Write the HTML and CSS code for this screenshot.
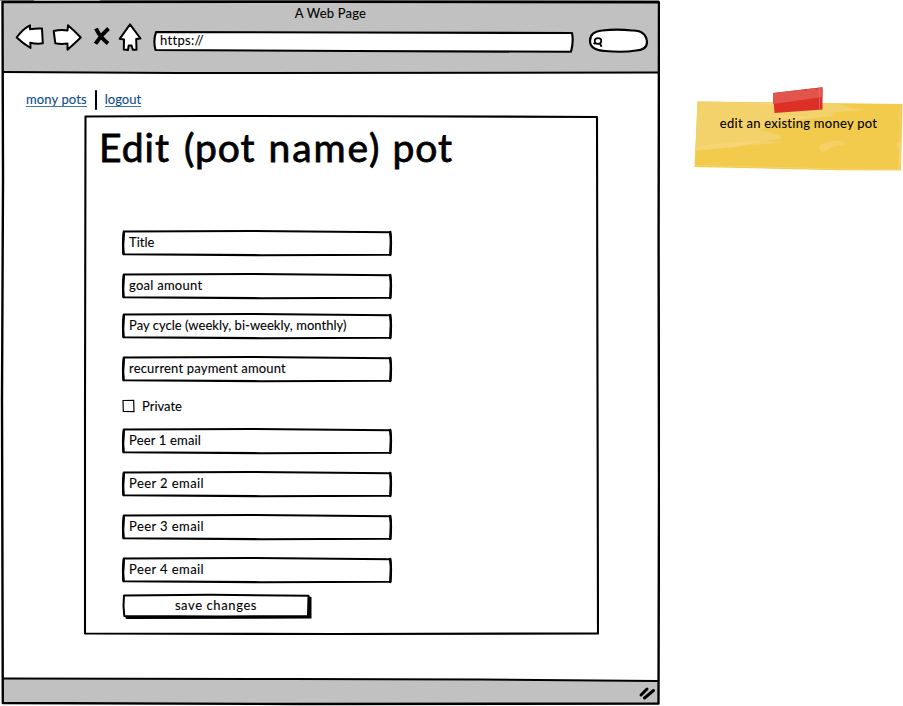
FILE: index.html
```html
<!DOCTYPE html>
<html lang="en">
<head>
<meta charset="utf-8">
<title>A Web Page</title>
<link rel="stylesheet" href="styles.css">
</head>
<body>
<svg class="defs" width="0" height="0" aria-hidden="true">
  <symbol id="field" viewBox="0 0 272 28">
    <path d="M3 2.5L130 2L269 3.2L270 10L269.4 25.7L140 26.2L2.5 25.2L2 17Z" fill="#fff" stroke="#000" stroke-width="2.1" stroke-linejoin="round"/>
    <path d="M2.8 3Q1.5 13 2.5 25M269.3 3Q270.6 13 269.3 26" fill="none" stroke="#000" stroke-width="2.3" stroke-linecap="round"/>
  </symbol>
</svg>
<main class="browser">
  <svg class="frame" viewBox="0 0 660 706" aria-hidden="true">
    <path d="M2 1.7L659 2.2V73H3Z" fill="#c1c1c1"/>
    <path d="M3 678.5L300 679L659 681V704L3 703Z" fill="#c1c1c1"/>
    <path d="M0 .5H34M100 .5H659" stroke="#8b908b"/>
    <path d="M2.5 2L330 1.7L659 2.2L658.6 240L659 480L658.5 703.5L300 704L2.8 703L2 400L3 180Z" fill="none" stroke="#000" stroke-width="2.4" stroke-linejoin="round"/>
    <path d="M3 72L180 73L659 72.5M3 678.5L290 679L480 679.5L658 681" fill="none" stroke="#000" stroke-width="2"/>
    <path d="M641 695L647 689M644.5 698L653.5 690.5" fill="none" stroke="#000" stroke-width="3" stroke-linecap="round"/>
  </svg>
  <header class="toolbar">
    <div class="page-title">A Web Page</div>
    <div class="controls">
      <svg class="tools" viewBox="0 0 130 32" aria-hidden="true">
        <g fill="#fff" stroke="#000" stroke-width="2" stroke-linejoin="round">
          <path d="M2.7 16.5Q8 8.5 16 4.3V8.2Q22 7.2 28 7.5L28.8 22.3Q23 23.3 16.3 21.7L16.5 27Q9 22.5 2.7 16.5Z"/>
          <path d="M39.7 10Q47 8.2 53.5 9.5L54 4.3Q60 9.5 66.8 16.5Q60 23 53.5 28.7L53.5 22.5Q47 23.5 41.3 22.3Z"/>
          <path d="M116 3.4L126.5 17.5L122.2 18L122.5 28.7H118.8L117.5 24.5H114.7L114 29L109.8 28.5L110 18.5L105.7 17.8Z"/>
        </g>
        <path d="M82 7.5Q86 16 94 22.5M94.5 7.5Q87 14 81.5 22.8" fill="none" stroke="#000" stroke-width="4"/>
      </svg>
      <div class="address">
        <svg class="sketch" viewBox="0 0 424 24" aria-hidden="true"><path d="M4 3L200 3.5L420 4Q421.8 12 419 22.8L200 22L3.5 21Q1 12 4 3Z" fill="#fff" stroke="#000" stroke-width="2.1" stroke-linejoin="round"/></svg>
        <span class="t url">https://</span>
      </div>
      <svg class="search" viewBox="0 0 62 28" aria-hidden="true">
        <path d="M3 14Q3 4.5 15 3.5Q30 1.8 45 3.5Q59 3 60 15Q60 23 49 23.5Q36 25.7 18 24Q3 23 3 14Z" fill="#fff" stroke="#000" stroke-width="2.2"/>
        <ellipse cx="11" cy="14" rx="3.3" ry="2.9" fill="none" stroke="#000" stroke-width="1.7"/>
        <path d="M6.5 16L8.5 17M12.5 16L14.7 19.8" stroke="#000" stroke-width="1.8" fill="none"/>
      </svg>
    </div>
  </header>
  <nav class="links">
    <a class="pots">mony pots</a><i class="divider"></i><a class="logout">logout</a>
  </nav>
  <section class="panel">
    <svg class="sketch" viewBox="0 0 516 521" aria-hidden="true"><path d="M2.5 2.5L120 2L300 2.2L514 3L514.5 270L515 519.5L250 520L2 519.5L2 300Z" fill="#fff" stroke="#000" stroke-width="2.1" stroke-linejoin="round"/></svg>
    <h1><span class="w1">Edit</span> <span class="w2">(pot</span> <span class="w3">name)</span> <span class="w4">pot</span></h1>
    <form class="form">
      <div class="field f1"><svg class="sketch"><use href="#field"/></svg><span class="t title">Title</span></div>
      <div class="field f2"><svg class="sketch"><use href="#field"/></svg><span class="t goal">goal amount</span></div>
      <div class="field f3"><svg class="sketch"><use href="#field"/></svg><span class="t cycle">Pay cycle (weekly, bi-weekly, monthly)</span></div>
      <div class="field f4"><svg class="sketch"><use href="#field"/></svg><span class="t recur">recurrent payment amount</span></div>
      <label class="check"><svg viewBox="0 0 14 14" width="14" height="14" aria-hidden="true"><path d="M1 1.5L11.7 1.3L12 12.7L1.3 12.4Z" fill="#fff" stroke="#000" stroke-width="1.2"/></svg><span class="t private">Private</span></label>
      <div class="field f5"><svg class="sketch"><use href="#field"/></svg><span class="t peer first">Peer 1 email</span></div>
      <div class="field f6"><svg class="sketch"><use href="#field"/></svg><span class="t peer">Peer 2 email</span></div>
      <div class="field f7"><svg class="sketch"><use href="#field"/></svg><span class="t peer">Peer 3 email</span></div>
      <div class="field f8"><svg class="sketch"><use href="#field"/></svg><span class="t peer">Peer 4 email</span></div>
      <div class="save">
        <svg class="sketch" viewBox="0 0 192 28" aria-hidden="true"><path d="M4 24L187 24V4L190.5 5V26.6L5 27Z"/><path d="M3 3.5L90 2.8L187.5 3.7L187 24L100 24.4L3.3 24L2.5 14Z" fill="#fff" stroke="#000" stroke-width="2" stroke-linejoin="round"/></svg>
        <span class="t savetext">save changes</span>
      </div>
    </form>
  </section>
</main>
<aside class="note">
  <svg class="sketch" viewBox="0 0 212 90" aria-hidden="true">
    <path d="M6.5 16.5L211.5 19L210 85.5L150 85.2L3.5 82Z" fill="#f2ca4c"/>
    <path d="M6.5 16.5L148 18.5Q155 23 177 25Q155 26 139 28Q150 32 130 32Q95 35 70 45Q98 52 88 54Q65 58 42 62Q20 64 4.5 65Z" fill="#f4d26b"/>
    <path d="M5 62Q45 54 99 57Q65 60 36 63L5 66ZM61 17L139 18Q115 25 83 30Q113 31 133 32Q105 37 76 31Q105 25 61 17ZM130 66Q124 60 136 57Q152 53 156 59Q140 61 133 67ZM203 60L210 56V82H208V63Z" fill="#f5d87e" opacity=".5"/>
    <path d="M4 80.5L150 84L209 84.5M209 22L208 84" fill="none" stroke="#f5d87e" opacity=".6"/>
    <path d="M82 8L131.5 2.2V24.5L83.5 28Z" fill="#dc3027"/>
    <path d="M82 8L131.5 2.2V12L82 19Z" fill="#e2554c"/>
    <path d="M113 5L117 4.5L115 6ZM124 3.5H127L126 5Z" fill="#dc3027"/>
    <path d="M128.5 3V24" stroke="#e77069" stroke-width=".7"/>
  </svg>
  <span class="t notetext">edit an existing money pot</span>
</aside>
</body>
</html>
```
FILE: styles.css
```css
* { box-sizing: border-box; }
body {
  margin: 0;
  width: 903px;
  height: 706px;
  overflow: hidden;
  display: flex;
  background: #fff;
  color: #000;
  font: 13px/16px Lato, "Open Sans", sans-serif;
  -webkit-text-stroke: .1px currentColor;
}
.defs { position: absolute; }
.browser {
  position: relative;
  width: 660px;
  height: 706px;
  flex: none;
}
.frame, .sketch {
  position: absolute;
  inset: 0;
  width: 100%;
  height: 100%;
}
.t { position: relative; white-space: nowrap; }
.toolbar { position: relative; height: 73px; padding-top: 5px; }
.page-title { padding-left: 1px; text-align: center; letter-spacing: .2px; }
.controls { display: flex; align-items: flex-start; }
.tools { width: 130px; height: 32px; margin-left: 14px; }
.address { position: relative; width: 424px; height: 24px; margin: 8px 0 0 8px; padding: 3px 8px; }
.address .t { display: block; }
.url { letter-spacing: .3px; }
.search { width: 62px; height: 28px; margin: 6px 0 0 11px; }
.links { position: relative; display: flex; height: 43px; padding: 18px 0 0 26px; color: #0a4d8c; }
.links a { height: 16px; line-height: 17px; border-bottom: 1px solid #3b78ad; white-space: nowrap; }
.pots { letter-spacing: .12px; }
.divider { width: 2px; height: 20px; margin: -1px 8px 0 8px; background: #000; border-radius: 1px; }
.panel { position: relative; width: 516px; height: 521px; margin-left: 83px; margin-top: -2px; padding: 9px 0 0 16px; }
h1 {
  position: relative;
  margin: 0;
  height: 50px;
  font-size: 39px;
  line-height: 48px;
  font-weight: 400;
  white-space: nowrap;
  -webkit-text-stroke: .8px #000;
  stroke-linejoin: round;
  letter-spacing: 1px;
}
.w2 { margin-left: 3px; }
.w3 { margin-left: 2px; letter-spacing: 1.9px; }
.form { position: relative; padding: 56px 0 0 22px; display: flex; flex-direction: column; align-items: flex-start; }
.field { position: relative; width: 272px; height: 28px; margin-bottom: 15px; padding: 5px 8px; }
.field .t { display: block; }
.goal { letter-spacing: .26px; }
.cycle { letter-spacing: .03px; }
.recur { letter-spacing: .18px; }
.peer { letter-spacing: .42px; }
.first { letter-spacing: .17px; }
.f2 { margin-bottom: 12px; }
.check { display: flex; gap: 6px; height: 16px; margin: 0 0 13px 1px; }
.check svg { margin-top: 1px; }
.f8 { margin-bottom: 8px; }
.save { position: relative; width: 192px; height: 28px; padding: 5px 9px 5px 7px; text-align: center; }
.savetext { letter-spacing: .6px; }
.note { position: relative; width: 212px; height: 90px; margin: 85px 0 0 31px; padding: 30px 0 0 3px; text-align: center; }
.notetext { letter-spacing: .27px; }
```
